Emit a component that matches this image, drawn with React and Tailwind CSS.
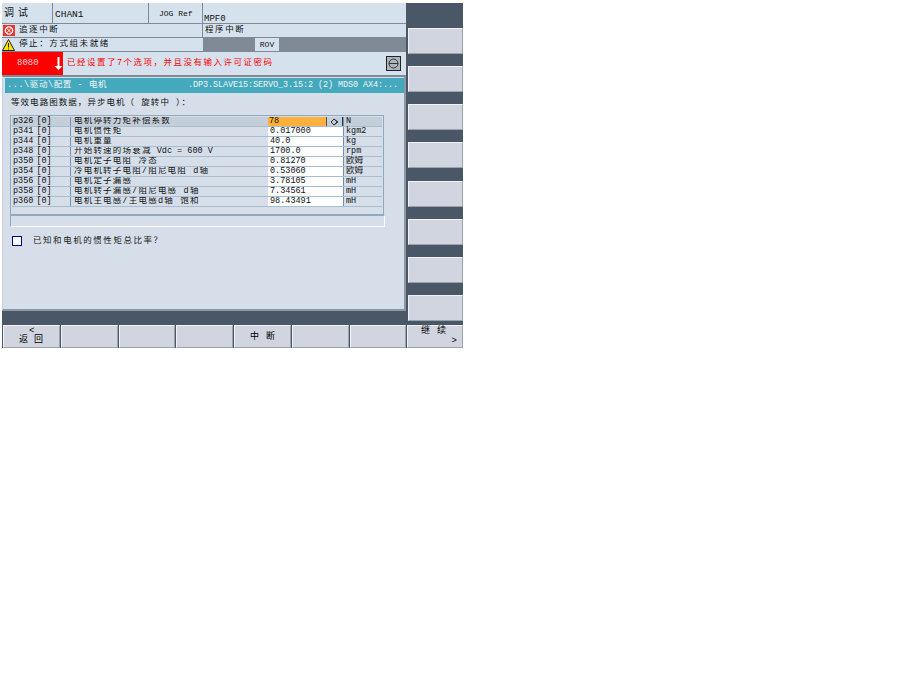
const F = '[font-family:"Liberation_Mono","Noto_Sans_CJK_SC",monospace]';
const rows = [
  ["p326", "电机停转力矩补偿系数", "78", "N"],
  ["p341", "电机惯性矩", "0.017000", "kgm2"],
  ["p344", "电机重量", "40.0", "kg"],
  ["p348", <>开始转速的场衰减<span className="tracking-normal"> Vdc = 600 V</span></>, "1700.0", "rpm"],
  ["p350", "电机定子电阻 冷态", "0.81270", "欧姆"],
  ["p354", "冷电机转子电阻/阻尼电阻 d轴", "0.53060", "欧姆"],
  ["p356", "电机定子漏感", "3.78105", "mH"],
  ["p358", "电机转子漏感/阻尼电感 d轴", "7.34561", "mH"],
  ["p360", "电机主电感/主电感d轴 饱和", "98.43491", "mH"],
];
const bevel = "bg-[#d0d5df] border border-t-[#f0f2f6] border-l-[#f0f2f6] border-b-[#9aa3ad] border-r-[#9aa3ad]";

function SideKey({ extra = "" }) {
  return <div className={`w-[55px] h-[26px] ${extra} ${bevel}`} />;
}
function BottomKey({ w, children }) {
  return <div className={`${w} h-[23px] relative shrink-0 ${bevel} text-[9px] leading-[9px] text-black`}>{children}</div>;
}
function Row({ r, first }) {
  return (
    <div className={`flex h-[10px] border-b border-[#a9bdd0] text-[8.5px] leading-[9px] text-[#111] ${first ? "bg-[#c3ced8]" : ""}`}>
      <div className="w-[59px] shrink-0 pl-[1px] border-r border-[#6d94b8] whitespace-nowrap">{r[0]}<span className="ml-[3px]">[0]</span></div>
      <div className="w-[197px] shrink-0 pl-[3px] whitespace-nowrap overflow-hidden tracking-[1.2px]">{r[1]}</div>
      {first ? (
        <div className="w-[75px] shrink-0 flex bg-[#c3ced8]">
          <div className="w-[59px] bg-[#ffb13b] pl-[1px] border-r border-[#555]">{r[2]}</div>
          <div className="flex-1 flex items-center justify-center border-r border-[#333]">
            <svg width="9" height="8" viewBox="0 0 9 8" fill="none" stroke="#333" strokeWidth="1"><path d="M1 4l3-3 3 3-3 3z" /><path d="M4 1l4 3-4 3" /></svg>
          </div>
        </div>
      ) : (
        <div className="w-[75px] shrink-0 bg-white pl-[2px]">{r[2]}</div>
      )}
      <div className={`flex-1 pl-[2px] border-l border-[#6d94b8] whitespace-nowrap ${first ? "bg-[#c3ced8]" : ""}`}>{r[3]}</div>
    </div>
  );
}

export default function App() {
  return (
    <div className={`w-[922px] h-[692px] bg-white ${F}`}>
      <div className="h-[3px]" />
      <div className="ml-[2px] w-[461px] h-[345px] flex flex-col bg-[#4a5766]">
        <div className="flex h-[322px]">
          <div className="w-[404px] shrink-0 flex flex-col">
            <div className="h-[21px] flex bg-[#d6e1ee] border-b border-[#7f8a96] text-[9px] text-[#111]">
              <div className="w-[51px] border-r border-[#7f8a96] pl-[2px] pt-[5px] tracking-[4px] text-[10px] leading-[12px]">调试</div>
              <div className="w-[96px] border-r border-[#7f8a96] pl-[2px] pt-[5px] text-[9.5px]">CHAN1</div>
              <div className="w-[54px] border-r border-[#7f8a96] pl-[10px] pt-[5px] text-[8px] whitespace-nowrap">JOG Ref</div>
              <div className="flex-1 pl-[1px] pt-[10px]">MPF0</div>
            </div>
            <div className="h-[14px] flex bg-[#d6e1ee] border-b border-[#7f8a96] text-[8.5px] leading-[13px] text-[#111]">
              <div className="w-[201px] border-r border-[#7f8a96] flex items-center gap-[4px] pl-[1px] tracking-[1.6px]">
                <svg width="12" height="11" viewBox="0 0 12 11"><rect width="12" height="11" fill="#e8342c" /><circle cx="6" cy="5.5" r="3.7" fill="none" stroke="#fff" strokeWidth="1.3" /><path d="M3.5 3l5 5M8.5 3l-5 5" stroke="#fff" strokeWidth="1" /></svg>
                追逐中断
              </div>
              <div className="flex-1 pl-[2px] tracking-[1.6px]">程序中断</div>
            </div>
            <div className="h-[14px] flex bg-[#d6e1ee] border-b border-[#7f8a96] text-[8.5px] leading-[13px] text-[#111]">
              <div className="w-[201px] flex items-center gap-[4px] tracking-[1.6px]">
                <svg width="13" height="12" viewBox="0 0 13 12"><path d="M6.5 .5L12.5 11.5H.5z" fill="#ffe400" stroke="#222" strokeWidth="1" /><path d="M6.5 4v4.5M6.5 9.5v1" stroke="#222" strokeWidth="1" /></svg>
                停止：方式组未就绪
              </div>
              <div className="flex-1 bg-[#7f8a96] pl-[52px]">
                <div className="w-[24px] h-[13px] bg-[#d6e1ee] text-center text-[8px]">ROV</div>
              </div>
            </div>
            <div className="h-[23px] flex items-center bg-[#d6e1ee]">
              <div className="w-[61px] h-full bg-[#ff0000] flex items-center text-[#f5d5d5] text-[9px] pl-[15px] gap-[15px]">
                8080
                <svg width="9" height="13" viewBox="0 0 9 13" className="shrink-0"><path d="M3.5 0h2v9H8.5L4.5 13 .5 9h3z" fill="#fff" /></svg>
              </div>
              <div className="w-[323px] pl-[4px] text-[#f00] text-[8.5px] whitespace-nowrap tracking-[1.5px]">已经设置了7个选项，并且没有输入许可证密码</div>
              <div className="w-[15px] h-[15px] bg-[#aeb6bd] border border-[#222] flex items-center justify-center">
                <svg width="11" height="11" viewBox="0 0 11 11" fill="none" stroke="#333"><circle cx="5.5" cy="5.5" r="4.5" /><path d="M1 5.5h9" /></svg>
              </div>
            </div>
            <div className="h-[236px] border-t-2 border-[#7f8a96] border-r-2 border-r-[#8a97a5] border-b-2 border-b-[#8a97a5] border-l border-l-[#c6cfda] bg-[#d6dfe9] pl-[2px] flex flex-col">
              <div className="mt-[1px] h-[15px] bg-[#45a9bd] text-[#f0f5f5] text-[8.5px] leading-[15px] flex justify-between pl-[2px] pr-[6px] whitespace-nowrap overflow-hidden">
                <span className="tracking-[0.6px]">...\驱动\配置 - 电机</span>
                <span className="tracking-[-0.1px]">.DP3.SLAVE15:SERVO_3.15:2 (2) MDS0 AX4:...</span>
              </div>
              <div className="pl-[6px] mt-[4px] h-[14px] text-[8.5px] leading-[12px] text-[#111] tracking-[1.05px] whitespace-nowrap">等效电路图数据，异步电机（ 旋转中 ）：</div>
              <div className="ml-[5px] mt-[4px] w-[374px] h-[100px] border border-[#8fa9c2] px-[1px] py-[1px] flex flex-col">
                <div className="w-[370px]">
                  {rows.map((r, i) => <Row key={r[0]} r={r} first={i === 0} />)}
                </div>
              </div>
              <div className="ml-[5px] h-[12px] w-[375px] bg-[#d6dfe9] border border-[#8fa9c2] border-b-white border-r-white" />
              <div className="ml-[7px] mt-[8px] flex items-center gap-[11px] text-[8.5px] text-[#222] tracking-[1.55px]">
                <div className="w-[10px] h-[10px] bg-white border border-[#00008b]" />
                已知和电机的惯性矩总比率？
              </div>
            </div>
          </div>
          <div className="flex-1 pl-[2px] pt-[25px] flex flex-col gap-[12px]">
            <SideKey /><SideKey /><SideKey /><SideKey /><SideKey extra="mt-[1px]" /><SideKey /><SideKey /><SideKey />
          </div>
        </div>
        <div className="flex h-[23px] pl-[1px] gap-[1px]">
          <BottomKey w="w-[57px]">
            <span className="absolute left-[25px] top-[1px]">&lt;</span>
            <span className="absolute left-[15px] top-[10px] tracking-[6px] whitespace-nowrap">返回</span>
          </BottomKey>
          <BottomKey w="w-[57px]" />
          <BottomKey w="w-[56px]" />
          <BottomKey w="w-[57px]" />
          <BottomKey w="w-[57px]"><span className="absolute left-[15px] top-[7px] tracking-[7px] whitespace-nowrap">中断</span></BottomKey>
          <BottomKey w="w-[57px]" />
          <BottomKey w="w-[56px]" />
          <BottomKey w="w-[56px]">
            <span className="absolute left-[13px] top-[1px] tracking-[7px] whitespace-nowrap">继续</span>
            <span className="absolute right-[5px] top-[11px]">&gt;</span>
          </BottomKey>
        </div>
      </div>
    </div>
  );
}
